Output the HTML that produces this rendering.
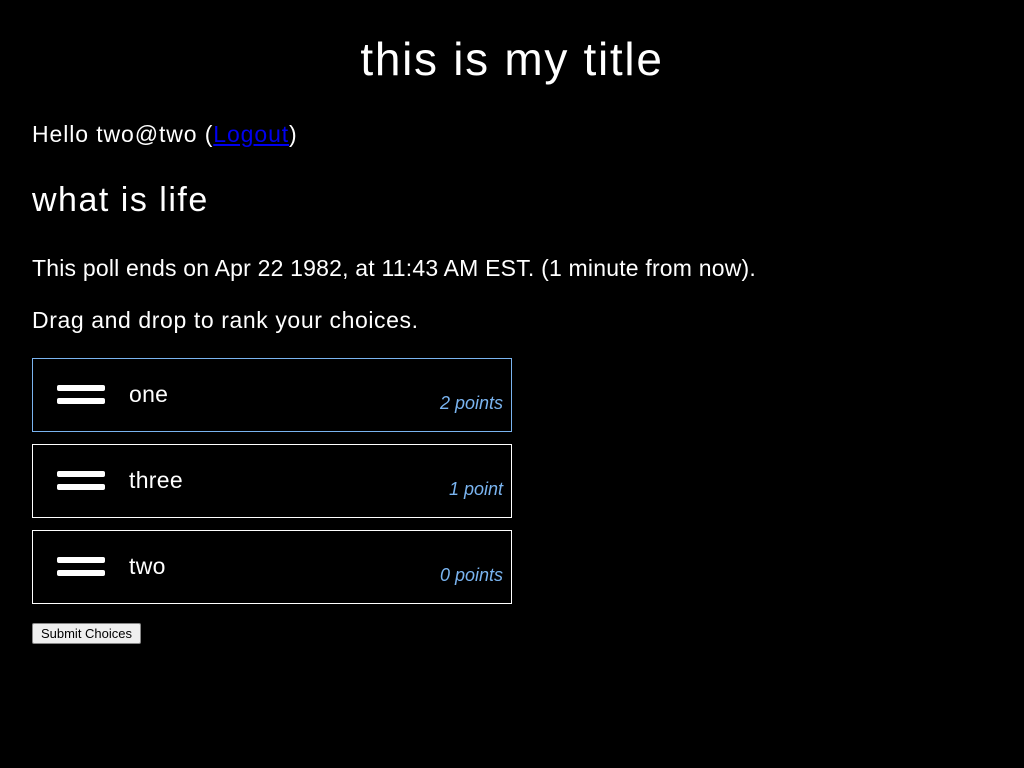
<!DOCTYPE html>
<html><head><style>
body{margin:0;background:#000;color:#fff;font-family:"Liberation Sans",sans-serif;}
.t{position:absolute;white-space:nowrap;}
.card{position:absolute;left:32px;width:478px;height:72px;border:1px solid #fff;}
.bar{position:absolute;left:24px;width:48px;height:6px;background:#fff;border-radius:2px;}
.lab{position:absolute;left:96px;top:22px;font-size:23px;letter-spacing:0.3px;}
.pts{position:absolute;right:8px;top:34px;font-size:18px;font-style:italic;color:#7ab4f0;}
</style></head><body>
<div class="t" style="left:0;width:1024px;text-align:center;top:32px;font-size:46px;letter-spacing:1.7px;">this is my title</div>
<div class="t" style="left:32px;top:121px;font-size:23px;letter-spacing:0.9px;">Hello two@two (<span style="color:#00e;text-decoration:underline">Logout</span>)</div>
<div class="t" style="left:32px;top:181px;font-size:34px;letter-spacing:1.5px;">what is life</div>
<div class="t" style="left:32px;top:255px;font-size:23px;letter-spacing:0.2px;">This poll ends on Apr 22 1982, at 11:43 AM EST. (1 minute from now).</div>
<div class="t" style="left:32px;top:307px;font-size:23px;letter-spacing:0.6px;">Drag and drop to rank your choices.</div>
<div class="card" style="top:358px;border-color:#7ab4f0"><div class="bar" style="top:26px"></div><div class="bar" style="top:39px"></div><div class="lab">one</div><div class="pts">2 points</div></div>
<div class="card" style="top:444px"><div class="bar" style="top:26px"></div><div class="bar" style="top:39px"></div><div class="lab">three</div><div class="pts">1 point</div></div>
<div class="card" style="top:530px"><div class="bar" style="top:26px"></div><div class="bar" style="top:39px"></div><div class="lab">two</div><div class="pts">0 points</div></div>
<div class="t" style="left:32px;top:623px;width:107px;height:19px;background:#efefef;border:1px solid #888;border-radius:2px;color:#000;font-size:13px;text-align:center;line-height:19px;">Submit Choices</div>
</body></html>
